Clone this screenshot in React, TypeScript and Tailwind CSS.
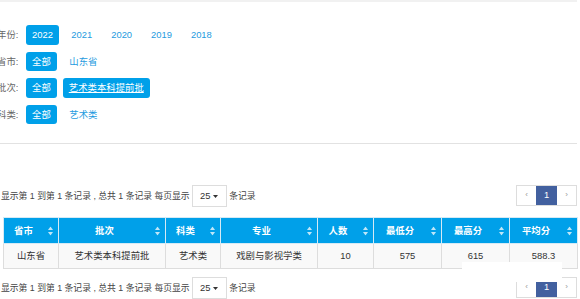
import React from "react";

const font = { fontFamily: '"Liberation Sans", "Noto Sans CJK SC", sans-serif' };

const years = ["2022", "2021", "2020", "2019", "2018"];

const Opt = ({ text, active, underline }: { text: string; active?: boolean; underline?: boolean }) =>
    active ? (
        <span className={"h-[19.5px] px-[6px] rounded-[3px] bg-[#00a0e9] text-white flex items-center " + (underline ? "underline" : "")}>{text}</span>
    ) : (
        <span className="px-[6.5px] text-[#1e9be0]">{text}</span>
    );

const FilterRow = ({ label, children }: { label: string; children: React.ReactNode }) => (
    <div className="flex items-center gap-[6px] h-[19.5px]">
        <span className="w-[23px] -ml-[3px] shrink-0 whitespace-nowrap text-[#666]">{label}</span>
        {children}
    </div>
);

const SortIcon = () => (
    <svg width="5" height="9" viewBox="0 0 5 9" className="absolute right-[5px] top-1/2 -translate-y-1/2">
        <path d="M2.5 0 L5 3.6 L0 3.6 Z" fill="#bfe6f8" />
        <path d="M2.5 9 L5 5.4 L0 5.4 Z" fill="#bfe6f8" />
    </svg>
);

const cols = [
    { name: "省市", w: 55, v: "山东省" },
    { name: "批次", w: 107, v: "艺术类本科提前批" },
    { name: "科类", w: 55, v: "艺术类" },
    { name: "专业", w: 97, v: "戏剧与影视学类" },
    { name: "人数", w: 56, v: "10" },
    { name: "最低分", w: 68, v: "575" },
    { name: "最高分", w: 68, v: "615" },
    { name: "平均分", w: 68, v: "588.3" },
];

const PageBar = () => (
    <div className="flex items-center justify-between h-[22px]">
        <div className="flex items-center text-[#444] whitespace-nowrap pl-[1px]">
            <span className="text-[8.8px]">显示第 1 到第 1 条记录 , 总共 1 条记录 每页显示</span>
            <span className="ml-[2px] w-[35px] h-[22.5px] border border-[#ddd] flex items-center justify-center gap-[3px] text-[#333]">
                25
                <svg width="5" height="3" viewBox="0 0 5 3">
                    <path d="M0 0 L5 0 L2.5 3 Z" fill="#333" />
                </svg>
            </span>
            <span className="ml-[2.5px] text-[8.8px]">条记录</span>
        </div>
        <div className="flex h-[21px] border border-[#ddd] -mt-[2px]">
            <span className="w-[19px] flex items-center justify-center text-[#999] text-[8px]">‹</span>
            <span className="w-[21px] flex items-center justify-center bg-[#42609f] text-white">1</span>
            <span className="w-[19px] flex items-center justify-center text-[#999] text-[8px]">›</span>
        </div>
    </div>
);

export default function App() {
    return (
        <div className="relative w-[580px] h-[299px] overflow-hidden bg-white pr-[3px] text-[9.4px] leading-none" style={font}>
            <div className="h-[2px] bg-[#f1f1f1]" />
            <div className="flex flex-col gap-[7px] pt-[23px]">
                <FilterRow label="年份:">
                    <div className="flex items-center gap-[6px]">
                        {years.map((y, i) => (
                            <Opt key={y} text={y} active={i === 0} />
                        ))}
                    </div>
                </FilterRow>
                <FilterRow label="省市:">
                    <Opt text="全部" active />
                    <Opt text="山东省" />
                </FilterRow>
                <FilterRow label="批次:">
                    <Opt text="全部" active />
                    <Opt text="艺术类本科提前批" active underline />
                </FilterRow>
                <FilterRow label="科类:">
                    <Opt text="全部" active />
                    <Opt text="艺术类" />
                </FilterRow>
            </div>
            <div className="mt-[19px] h-px bg-[#e2e2e2]" />
            <div className="mt-[41px]">
                <PageBar />
            </div>
            <table className="ml-[3px] mt-[10px] w-[574px] border-collapse border border-[#ddd] table-fixed">
                <thead>
                    <tr className="h-[26px] bg-[#00a0e9] text-white font-bold">
                        {cols.map((c) => (
                            <th key={c.name} style={{ width: c.w }} className="relative border border-[#d5eaf5] pr-[15px] text-center font-bold">
                                {c.name}
                                <SortIcon />
                            </th>
                        ))}
                    </tr>
                </thead>
                <tbody>
                    <tr className="h-[25px] bg-[#f9f9f9] text-[#333]">
                        {cols.map((c) => (
                            <td key={c.name} className="border border-[#ddd] text-center">
                                {c.v}
                            </td>
                        ))}
                    </tr>
                </tbody>
            </table>
            <div className="mt-[8px]">
                <PageBar />
            </div>
            <div className="absolute left-[462px] top-[262px] w-[100px] h-[20px] bg-white" />
        </div>
    );
}
